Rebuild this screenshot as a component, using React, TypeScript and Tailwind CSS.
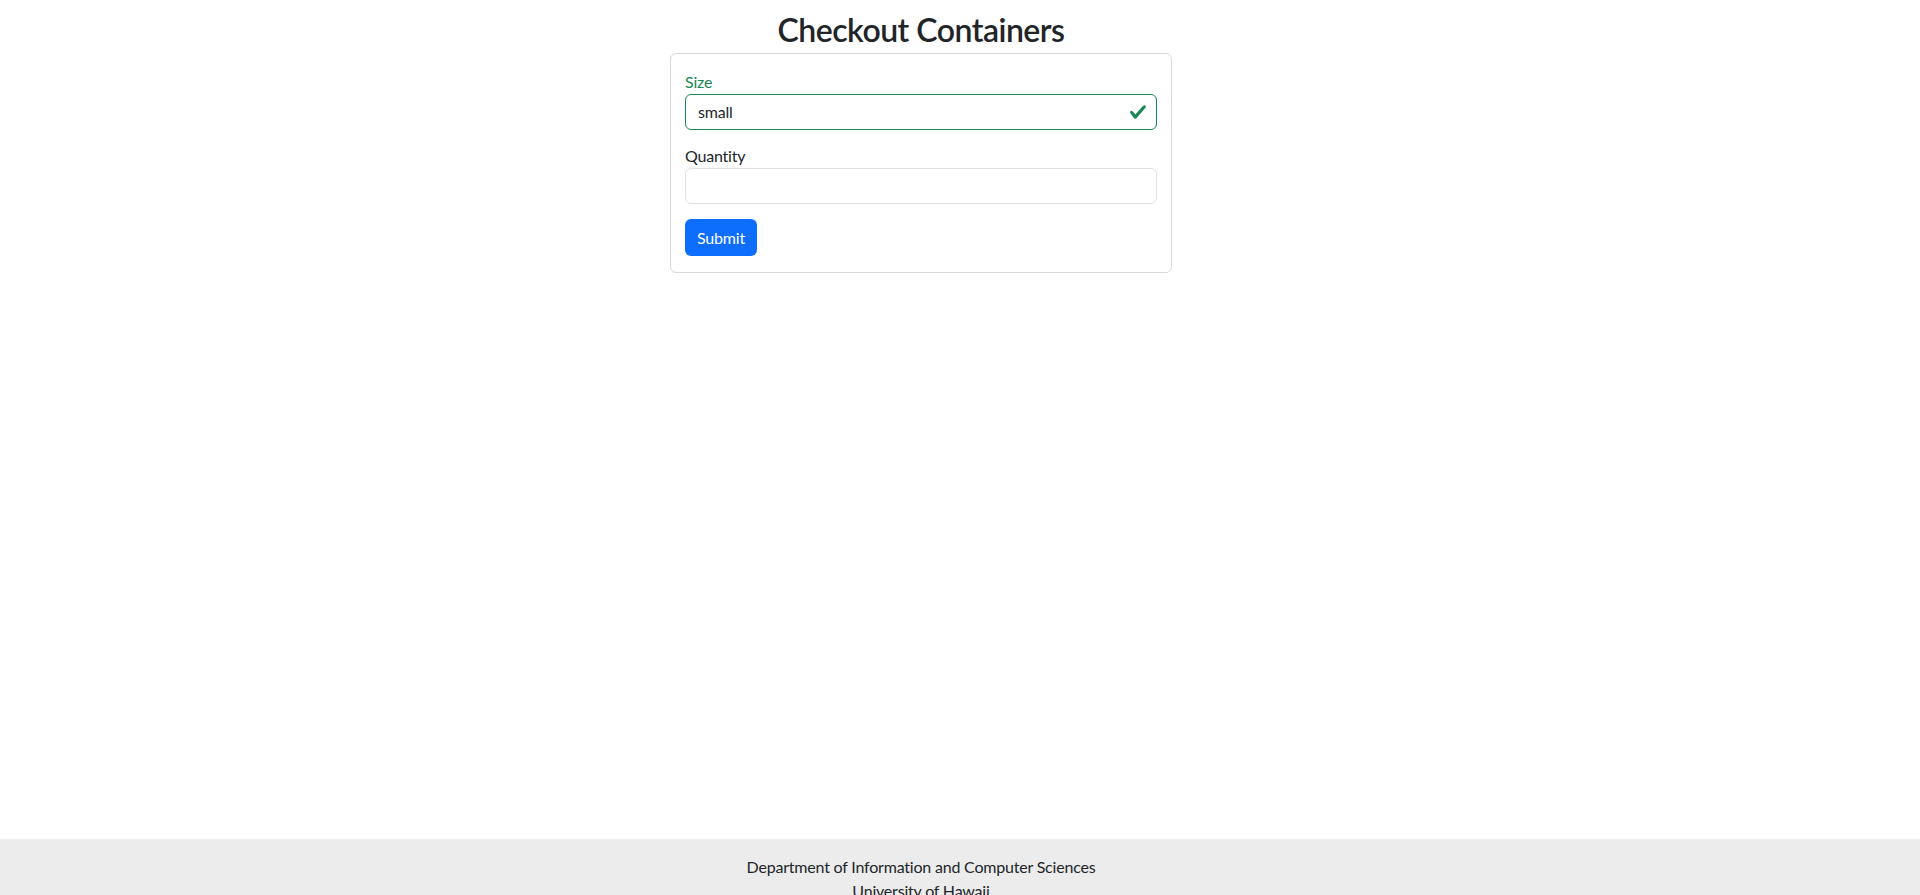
import React from "react";

export default function App() {
  return (
    <div className="w-full bg-white text-[#212529] font-['Lato',sans-serif] tracking-[-0.2px]">
      <main className="w-[1842px] h-[839px] pt-[11px]">
        <h2 className="text-center text-[32px] leading-[38px] font-semibold mb-[4px] tracking-[-0.5px]">Checkout Containers</h2>
        <div className="mx-auto w-[502px] border border-[#d9d9d9] rounded-[6px] px-[14px] py-4">
          <label className="block text-[16px] leading-6 text-[#198754]">Size</label>
          <div className="relative h-[36px] border border-[#198754] rounded-[6px] px-3 flex items-center">
            <span className="text-[16px]">small</span>
            <svg
              className="absolute right-[9px] top-1/2 -translate-y-1/2 w-[18px] h-[18px]"
              viewBox="0 0 8 8"
            >
              <path
                fill="#198754"
                d="M2.3 6.73.6 4.53c-.4-1.04.46-1.4 1.1-.8l1.1 1.4 3.4-3.8c.6-.63 1.6-.27 1.2.7l-4 4.6c-.43.5-.8.4-1.1.1z"
              />
            </svg>
          </div>
          <label className="block mt-[14px] text-[16px] leading-6">Quantity</label>
          <div className="h-[36px] border border-[#dee2e6] rounded-[6px]"></div>
          <button className="mt-[15px] h-[37px] px-3 rounded-[6px] bg-[#0d6efd] text-white text-[16px]">Submit</button>
        </div>
      </main>
      <footer className="bg-[#ececec] py-4 text-[16px] leading-6">
        <div className="w-[1842px] text-center">
          <div>Department of Information and Computer Sciences</div>
          <div>University of Hawaii</div>
        </div>
      </footer>
    </div>
  );
}
